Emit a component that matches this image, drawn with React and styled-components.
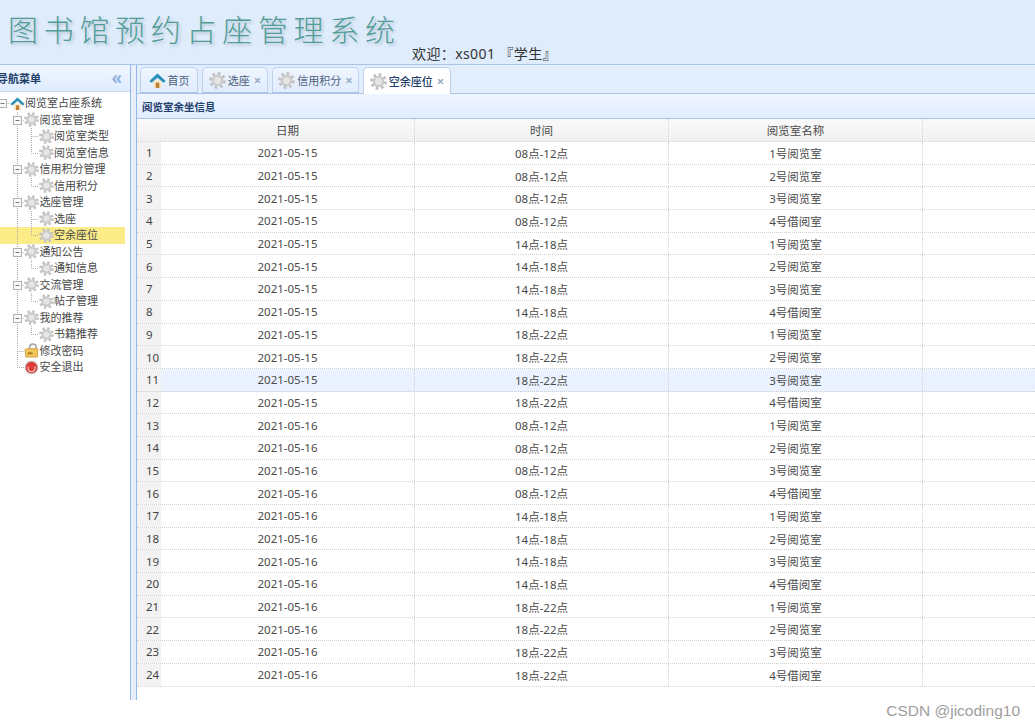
import React from 'react'
import styled, { createGlobalStyle } from 'styled-components'

const GlobalStyle = createGlobalStyle`
    html, body{
        margin: 0;
        padding: 0;
        background: #fff;
    }
    body{
        font-family: "Noto Sans", "Noto Sans CJK SC", sans-serif;
        font-size: 11.5px;
        color: #444;
    }
`

const Page = styled.div`
    width: 1035px;
    height: 728px;
    overflow: hidden;
    display: flex;
    flex-direction: column;
`

const Header = styled.header`
    height: 65px;
    flex-shrink: 0;
    display: flex;
    background: #dfecfc;
    border-bottom: 1px solid #a9c4e6;
    box-sizing: border-box;
`

const Logo = styled.h1`
    margin: 0;
    padding: 8px 0 0 8px;
    width: 412px;
    box-sizing: border-box;
    font-family: "Noto Sans CJK SC", sans-serif;
    font-size: 30px;
    line-height: 40px;
    font-weight: 300;
    letter-spacing: 5.7px;
    white-space: nowrap;
    color: #549d95;
    text-shadow: 2px 2px 3px rgba(80, 110, 130, 0.3);
`

const Welcome = styled.div`
    padding-top: 44px;
    font-size: 14px;
    line-height: 20px;
    letter-spacing: 0.4px;
    color: #333;
    white-space: pre;
`

const Body = styled.div`
    height: 635px;
    flex-shrink: 0;
    display: flex;
`

const Side = styled.aside`
    width: 131px;
    flex-shrink: 0;
    box-sizing: border-box;
    border-right: 1px solid #95b8e7;
    overflow: hidden;
`

const SideHead = styled.div`
    height: 26px;
    display: flex;
    align-items: center;
    justify-content: space-between;
    padding-right: 8px;
    background: linear-gradient(to bottom, #eff5ff, #e0ecff);
    border-bottom: 1px solid #c5d7ef;
    font-weight: 700;
    font-size: 11px;
    color: #23406b;
`

const SideTitle = styled.span`
    margin-left: -3px;
`

const Collapse = styled.span`
    font-size: 17px;
    line-height: 18px;
    color: #8fb4e0;
`

const Tree = styled.ul`
    list-style: none;
    margin: 3px 5px 0 0;
    padding: 0;
`

const TreeRow = styled.li`
    height: 16.5px;
    margin-left: -5px;
    display: flex;
    align-items: center;
    background: ${props => props.$selected ? '#fbec88' : 'transparent'};
    color: #484848;
    font-size: 11px;
    white-space: nowrap;
`

const TreeLabel = styled.span`
    margin-left: 0.5px;
    line-height: 16px;
`

const Cell = styled.svg`
    width: 14.5px;
    height: 16.5px;
    flex-shrink: 0;
    display: block;
`

const Splitter = styled.div`
    width: 5px;
    flex-shrink: 0;
    background: #e6effb;
`

const Main = styled.main`
    flex: 1;
    min-width: 0;
    display: flex;
    flex-direction: column;
    border-left: 1px solid #95b8e7;
`

const TabStrip = styled.div`
    height: 29px;
    flex-shrink: 0;
    box-sizing: border-box;
    display: flex;
    align-items: flex-end;
    gap: 4px;
    padding-left: 3px;
    background: #e3eefc;
    border-bottom: 1px solid #a9c4e6;
`

const Tab = styled.div`
    width: ${props => props.$width}px;
    height: ${props => props.$active ? 27 : 26}px;
    box-sizing: border-box;
    margin-bottom: ${props => props.$active ? -1 : 0}px;
    display: flex;
    align-items: center;
    justify-content: center;
    gap: 2px;
    border: 1px solid #bcd2ee;
    border-bottom: ${props => props.$active ? 'none' : '1px solid #a9c4e6'};
    border-radius: 5px 5px 0 0;
    background: ${props => props.$active ? '#fff' : 'linear-gradient(to bottom, #eff5ff, #e0ecff)'};
    color: ${props => props.$active ? '#23406b' : '#4c5f78'};
    font-size: 11px;
    font-weight: ${props => props.$active ? 500 : 400};
`

const TabClose = styled.span`
    margin-left: 2px;
    font-size: 13px;
    line-height: 13px;
    font-weight: 700;
    color: #98abc6;
`

const PanelTitle = styled.div`
    height: 25px;
    flex-shrink: 0;
    box-sizing: border-box;
    display: flex;
    align-items: center;
    padding-left: 5px;
    background: linear-gradient(to bottom, #eff5ff, #e0ecff);
    border-bottom: 1px solid #a9c4e6;
    font-size: 10.5px;
    font-weight: 700;
    color: #23406b;
`

const Grid = styled.div`
    flex: 1;
    min-height: 0;
    display: flex;
    flex-direction: column;
`

const Row = styled.div`
    display: grid;
    grid-template-columns: 24px 254px 254px 254px 1fr;
    height: ${props => props.$head ? 23 : 22.7}px;
    flex-shrink: 0;
    box-sizing: border-box;
    border-bottom: 1px dotted #cfcfcf;
    background: ${props => props.$head ? 'linear-gradient(to bottom, #fafafa, #f0f0f0)' : props.$hover ? '#eaf2ff' : '#fff'};
`

const Num = styled.div`
    display: flex;
    align-items: center;
    padding-left: 9px;
    background: ${props => props.$head ? 'transparent' : '#f2f2f2'};
    color: #444;
`

const Col = styled.div`
    display: flex;
    align-items: center;
    justify-content: center;
    border-right: 1px dotted #d4d4d4;
    font-size: 11.5px;
    color: #4a4a4a;
`

const Filler = styled.div``

const Footer = styled.footer`
    flex: 1;
    display: flex;
    justify-content: flex-end;
    align-items: flex-start;
    padding: 1px 15px 0 0;
    font-family: "Liberation Sans", sans-serif;
    font-size: 15.5px;
    line-height: 20px;
    color: #9e9e9e;
`

const Cog = ({ size = 15 }) => (
    <svg width={size} height={size} viewBox="0 0 16 16" style={{ flexShrink: 0 }}>
        <circle cx="8" cy="8" r="6.4" fill="none" stroke="#c2c2c2" strokeWidth="3" strokeDasharray="2.5 2.53" />
        <circle cx="8" cy="8" r="5.5" fill="#cbcbcb" />
        <circle cx="8" cy="8" r="3.2" fill="#e6e6e6" />
    </svg>
)

const House = ({ size = 15 }) => (
    <svg width={size} height={size} viewBox="0 0 16 16" style={{ flexShrink: 0 }}>
        <rect x="4" y="8" width="8" height="7" fill="#f6e8cc" />
        <rect x="6.3" y="10" width="3.4" height="5" fill="#c07e32" />
        <path d="M0.3 8.4 L8 1.5 L15.7 8.4 L13.6 10 L8 5.4 L2.4 10 Z" fill="#2b8fb8" />
    </svg>
)

const LockIcon = () => (
    <svg width="15" height="15" viewBox="0 0 16 16" style={{ flexShrink: 0 }}>
        <path d="M6 7 V4.5 a3.5 3.5 0 0 1 7 0 V7" fill="none" stroke="#a3a3a3" strokeWidth="1.6" />
        <path d="M1 7 L3 6 H14.5 V15 H2 Z" fill="#f0c55a" stroke="#c9972e" strokeWidth="0.8" />
        <rect x="4" y="10" width="5" height="2" fill="#a8741a" />
    </svg>
)

const ExitIcon = () => (
    <svg width="15" height="15" viewBox="0 0 16 16" style={{ flexShrink: 0 }}>
        <circle cx="8" cy="8" r="6.8" fill="#de3a38" stroke="#c9c9c9" strokeWidth="1.2" />
        <path d="M4.6 7 a3.8 3.8 0 1 0 6.8 0" fill="none" stroke="#f7d4d0" strokeWidth="1.2" />
    </svg>
)

const dots = { stroke: '#aaa', strokeWidth: 1, strokeDasharray: '1 1' }

// one square of the tree: a connector line or the +/- box
const Connector = ({ kind }) => (
    <Cell viewBox="0 0 14.5 16.5">
        {kind === 'line' && <path d="M7.5 0 V16.5" fill="none" {...dots} />}
        {kind === 'tee' && <path d="M7.5 0 V16.5 M7.5 8.5 H14.5" fill="none" {...dots} />}
        {kind === 'elbow' && <path d="M7.5 0 V8.5 H14.5" fill="none" {...dots} />}
        {kind === 'toggle' && <path d="M7.5 0 V16.5 M7.5 8.5 H14.5" fill="none" {...dots} />}
        {kind === 'root' && <path d="M7.5 8.5 H14.5" fill="none" {...dots} />}
        {(kind === 'toggle' || kind === 'root') && (
            <g>
                <rect x="3.5" y="4.5" width="8" height="8" fill="#fafafa" stroke="#b0b0b0" />
                <path d="M5.5 8.5 H9.5" stroke="#777" />
            </g>
        )}
    </Cell>
)

const treeIcon = { home: <House />, cog: <Cog />, lock: <LockIcon />, exit: <ExitIcon /> }

const treeItems = [
    { cells: ['root'], icon: 'home', label: '阅览室占座系统' },
    { cells: ['', 'toggle'], icon: 'cog', label: '阅览室管理' },
    { cells: ['', 'line', 'tee'], icon: 'cog', label: '阅览室类型' },
    { cells: ['', 'line', 'elbow'], icon: 'cog', label: '阅览室信息' },
    { cells: ['', 'toggle'], icon: 'cog', label: '信用积分管理' },
    { cells: ['', 'line', 'elbow'], icon: 'cog', label: '信用积分' },
    { cells: ['', 'toggle'], icon: 'cog', label: '选座管理' },
    { cells: ['', 'line', 'tee'], icon: 'cog', label: '选座' },
    { cells: ['', 'line', 'elbow'], icon: 'cog', label: '空余座位', selected: true },
    { cells: ['', 'toggle'], icon: 'cog', label: '通知公告' },
    { cells: ['', 'line', 'elbow'], icon: 'cog', label: '通知信息' },
    { cells: ['', 'toggle'], icon: 'cog', label: '交流管理' },
    { cells: ['', 'line', 'elbow'], icon: 'cog', label: '帖子管理' },
    { cells: ['', 'toggle'], icon: 'cog', label: '我的推荐' },
    { cells: ['', 'line', 'elbow'], icon: 'cog', label: '书籍推荐' },
    { cells: ['', 'tee'], icon: 'lock', label: '修改密码' },
    { cells: ['', 'elbow'], icon: 'exit', label: '安全退出' },
]

const tabs = [
    { label: '首页', width: 58, icon: <House size={17} /> },
    { label: '选座', width: 66, icon: <Cog size={17} />, close: true },
    { label: '信用积分', width: 87, icon: <Cog size={17} />, close: true },
    { label: '空余座位', width: 88, icon: <Cog size={17} />, close: true, active: true },
]

const times = ['08点-12点', '14点-18点', '18点-22点']
const rooms = ['1号阅览室', '2号阅览室', '3号阅览室', '4号借阅室']

const rows = []
for (const date of ['2021-05-15', '2021-05-16']) {
    for (const time of times) {
        for (const room of rooms) {
            rows.push({ date, time, room })
        }
    }
}

const App = () => {
    return (
        <Page>
            <GlobalStyle />
            <Header>
                <Logo>图书馆预约占座管理系统</Logo>
                <Welcome>欢迎：xs001 『学生』</Welcome>
            </Header>
            <Body>
                <Side>
                    <SideHead>
                        <SideTitle>导航菜单</SideTitle>
                        <Collapse>«</Collapse>
                    </SideHead>
                    <Tree>
                        {treeItems.map((item) => (
                            <TreeRow key={item.label} $selected={item.selected}>
                                {item.cells.map((kind, i) => <Connector key={i} kind={kind} />)}
                                {treeIcon[item.icon]}
                                <TreeLabel>{item.label}</TreeLabel>
                            </TreeRow>
                        ))}
                    </Tree>
                </Side>
                <Splitter />
                <Main>
                    <TabStrip>
                        {tabs.map((tab) => (
                            <Tab key={tab.label} $width={tab.width} $active={tab.active}>
                                {tab.icon}
                                <span>{tab.label}</span>
                                {tab.close && <TabClose>×</TabClose>}
                            </Tab>
                        ))}
                    </TabStrip>
                    <PanelTitle>阅览室余坐信息</PanelTitle>
                    <Grid>
                        <Row $head>
                            <Num $head />
                            <Col>日期</Col>
                            <Col>时间</Col>
                            <Col>阅览室名称</Col>
                            <Filler />
                        </Row>
                        {rows.map((row, i) => (
                            <Row key={i} $hover={i === 10}>
                                <Num>{i + 1}</Num>
                                <Col>{row.date}</Col>
                                <Col>{row.time}</Col>
                                <Col>{row.room}</Col>
                                <Filler />
                            </Row>
                        ))}
                    </Grid>
                </Main>
            </Body>
            <Footer>CSDN @jicoding10</Footer>
        </Page>
    )
}

export default App
